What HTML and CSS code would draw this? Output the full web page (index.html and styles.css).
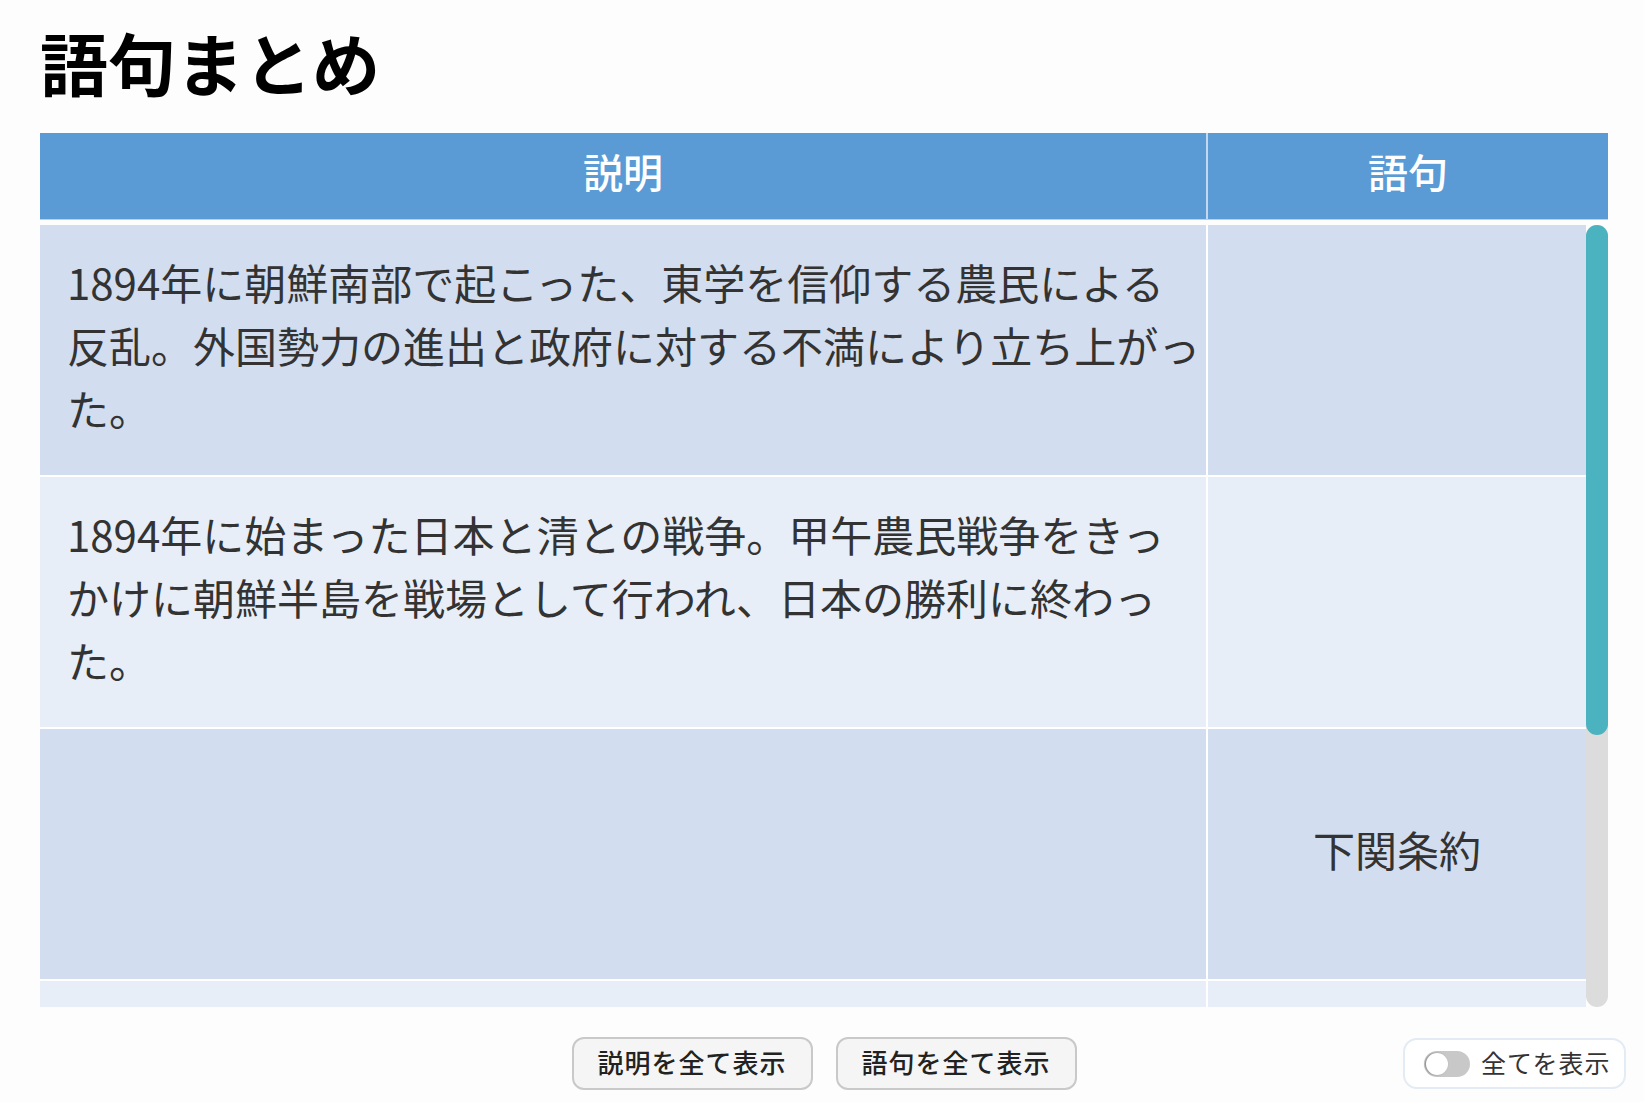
FILE: index.html
```html
<!DOCTYPE html>
<html lang="ja">
<head>
<meta charset="utf-8">
<title>語句まとめ</title>
<link rel="stylesheet" href="styles.css">
</head>
<body>
<main class="page">
  <h1 class="title">語句まとめ</h1>
  <section class="table">
    <div class="thead">
      <div class="th th-desc">説明</div>
      <div class="th th-term">語句</div>
    </div>
    <div class="tbody-wrap">
      <div class="tbody">
        <div class="row row-odd">
          <div class="cell cell-desc">1894年に朝鮮南部で起こった、東学を信仰する農民による反乱。外国勢力の進出と政府に対する不満により立ち上がった。</div>
          <div class="cell cell-term"></div>
        </div>
        <div class="row row-even">
          <div class="cell cell-desc">1894年に始まった日本と清との戦争。甲午農民戦争をきっかけに朝鮮半島を戦場として行われ、日本の勝利に終わった。</div>
          <div class="cell cell-term"></div>
        </div>
        <div class="row row-odd">
          <div class="cell cell-desc"></div>
          <div class="cell cell-term">下関条約</div>
        </div>
        <div class="row row-even">
          <div class="cell cell-desc"></div>
          <div class="cell cell-term"></div>
        </div>
      </div>
      <div class="scrollbar"><div class="thumb"></div></div>
    </div>
  </section>
  <div class="controls">
    <div class="buttons">
      <button class="btn" type="button">説明を全て表示</button>
      <button class="btn" type="button">語句を全て表示</button>
    </div>
    <label class="toggle-box">
      <span class="switch"><span class="knob"></span></span>
      <span class="toggle-label">全てを表示</span>
    </label>
  </div>
</main>
</body>
</html>
```

FILE: styles.css
```css
* { box-sizing: border-box; }
html, body { margin: 0; padding: 0; }
body {
  background: #fdfdfd;
  font-family: "Noto Sans CJK JP", "Noto Sans", sans-serif;
  color: #333;
  width: 1644px;
  height: 1102px;
  overflow: hidden;
}
.page { display: flex; flex-direction: column; }
.title {
  margin: 0 0 37px 40px;
  padding-top: 28px;
  font-size: 68px;
  line-height: 68px;
  font-weight: 700;
  color: #000;
}
.table { margin-left: 40px; width: 1568px; display: flex; flex-direction: column; }
.thead {
  display: flex;
  height: 87px;
  background: #5b9bd5;
  border-bottom: 1px solid #b9d0ec;
  margin-bottom: 5px;
}
.th {
  display: flex;
  align-items: center;
  justify-content: center;
  padding-bottom: 10px;
  color: #fff;
  font-size: 40px;
  font-weight: 500;
}
.th-desc { width: 1168px; border-right: 2px solid #c3d8ef; }
.th-term { flex: 1; }
.tbody-wrap { display: flex; height: 782px; }
.tbody { width: 1546px; overflow: hidden; display: flex; flex-direction: column; }
.row { display: flex; flex: none; height: 252px; border-bottom: 2px solid #fff; }
.row-odd { background: #d2deef; }
.row-even { background: #e8eef7; }
.cell {
  display: flex;
  align-items: center;
  padding-bottom: 12px;
  font-size: 42px;
  line-height: 63px;
  color: #333;
}
.cell-desc { width: 1168px; padding-left: 27px; padding-right: 1px; border-right: 2px solid #fff; }
.cell-term { flex: 1; justify-content: center; }
.scrollbar { width: 22px; background: #dcdcdc; border-radius: 11px; }
.thumb { height: 510px; background: #4bb3c0; border-radius: 11px; }
.controls {
  display: grid;
  grid-template-columns: 1fr auto 1fr;
  align-items: center;
  margin-top: 30px;
  padding-left: 4px;
}
.buttons { grid-column: 2; display: flex; gap: 23px; }
.btn {
  width: 241px;
  height: 53px;
  border: 2px solid #c9c9c9;
  border-radius: 12px;
  background: #f5f5f5;
  font-family: inherit;
  font-size: 26px;
  font-weight: 500;
  color: #222;
  letter-spacing: 1px;
  padding: 0 0 4px;
}
.toggle-box {
  grid-column: 3;
  justify-self: end;
  margin-right: 18px;
  width: 223px;
  height: 51px;
  display: flex;
  align-items: center;
  gap: 11px;
  padding-left: 19px;
  background: #fff;
  border: 2px solid #e3ebf5;
  border-radius: 14px;
}
.switch {
  position: relative;
  width: 46px;
  height: 26px;
  border-radius: 13px;
  background: #c8c8c8;
  flex: none;
}
.knob {
  position: absolute;
  left: 2px;
  top: 2px;
  width: 22px;
  height: 22px;
  border-radius: 50%;
  background: #fff;
  box-shadow: -1px 0 2px rgba(0,0,0,0.35);
}
.toggle-label { font-size: 25px; color: #333; letter-spacing: 1px; padding-bottom: 3px; }
```
